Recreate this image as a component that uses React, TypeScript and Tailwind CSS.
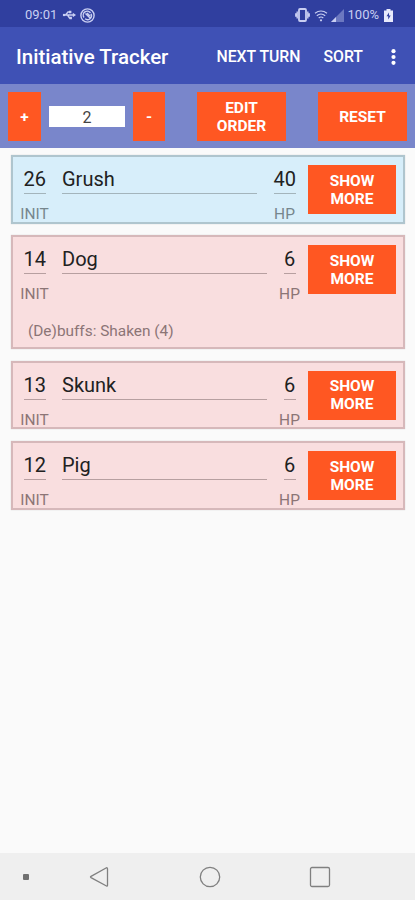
import React from 'react';
import clsx from 'clsx';

const COMBATANTS = [
  { id: 'grush', init: 26, name: 'Grush', hp: 40, active: true, debuffs: '' },
  { id: 'dog', init: 14, name: 'Dog', hp: 6, active: false, debuffs: 'Shaken (4)' },
  { id: 'skunk', init: 13, name: 'Skunk', hp: 6, active: false, debuffs: '' },
  { id: 'pig', init: 12, name: 'Pig', hp: 6, active: false, debuffs: '' }
];

type Combatant = (typeof COMBATANTS)[number];

const ActionButton = ({ className, children }: { className?: string; children: React.ReactNode }) => (
  <button
    className={clsx(
      'h-[49px] shrink-0 bg-[#ff5722] text-center text-[15.5px] leading-[18px] font-bold text-white',
      className
    )}
  >
    {children}
  </button>
);

const StatusBar = () => (
  <div className="flex h-[27px] items-center justify-between bg-[#303f9f] pt-[3px] pr-[22px] pl-[25px] text-[#c9cff2]">
    <div className="flex items-center">
      <span className="text-[13px] leading-4">09:01</span>
      {/* usb */}
      <svg width="14" height="12" viewBox="0 0 14 12" className="ml-[5px]" fill="none" stroke="currentColor" strokeWidth="1.4">
        <path d="M1 6h11M3.5 6L6 3h2M5.5 6l2 3h2" />
        <circle cx="2" cy="6" r="1.2" fill="currentColor" stroke="none" />
        <path d="M10.8 3.8L14 6l-3.200 2.200z" fill="currentColor" stroke="none" />
        <path d="M7 1.800h2.400v2.400H7zM7.500 7.800h2.400v2.400H7.500z" fill="currentColor" stroke="none" />
      </svg>
      <svg width="15" height="15" viewBox="0 0 15 15" className="ml-[4px]" fill="none" stroke="currentColor" strokeWidth="1.4">
        <circle cx="7.5" cy="7.5" r="6.6" />
        <path d="M4 9.500a4 4 0 0 1 6.500-4.700M11 5.800a4 4 0 0 1-6 5M5.500 5.500l4.500 4.500M7 5l3 3" />
      </svg>
    </div>
    <div className="flex items-center">
      {/* vibrate */}
      <svg width="15" height="14" viewBox="0 0 15 14" fill="none" stroke="currentColor" strokeWidth="1.8">
        <rect x="4" y="1" width="7" height="12" rx="1" />
        <path d="M2.200 3.500v7M12.800 3.500v7M.8 5.200v3.600M14.200 5.200v3.600" strokeWidth="1.4" />
      </svg>
      <svg width="14" height="13" viewBox="0 0 14 13" className="ml-[4px]" fill="none" stroke="currentColor" strokeWidth="1.2">
        <path d="M1 4.200q6-4.400 12 0M2.800 6.700q4.200-3.400 8.400 0M4.700 9q2.300-2 4.600 0" />
        <circle cx="7" cy="11.3" r="1.1" fill="currentColor" stroke="none" />
      </svg>
      <svg width="13" height="13" viewBox="0 0 13 13" className="ml-[3px]" fill="currentColor">
        <path d="M13 0v13H0z" opacity="0.4" />
        <path d="M5 8v5H0z" />
      </svg>
      <span className="ml-[4px] text-[13px] leading-4">100%</span>
      <svg width="9" height="13" viewBox="0 0 9 13" className="ml-[5px]">
        <path d="M2.500 0h4v1.500H9V13H0V1.500h2.500z" fill="#e8eafc" />
        <path d="M5 3.500L2.500 7.300h1.700v3.200l2.500-4H5z" fill="#303f9f" />
      </svg>
    </div>
  </div>
);

const AppBar = () => (
  <header className="flex h-[57px] items-center bg-[#3f51b5] pt-[2px] pr-[19px] pl-4 font-medium text-white">
    <h1 className="flex-1 text-[20.5px] leading-6 whitespace-nowrap">Initiative Tracker</h1>
    <button className="mr-[23px] text-[15.8px] whitespace-nowrap">NEXT TURN</button>
    <button className="mr-[28px] text-[15.8px]">SORT</button>
    <svg width="5" height="16" viewBox="0 0 5 16" fill="currentColor">
      <circle cx="2.5" cy="2.2" r="2.1" />
      <circle cx="2.5" cy="8" r="2.1" />
      <circle cx="2.5" cy="13.8" r="2.1" />
    </svg>
  </header>
);

const RoundControls = () => (
  <div className="flex h-[64px] items-center bg-[#7986cb] pt-px pr-[8px] pl-[8px]">
    <ActionButton className="w-[33px]">+</ActionButton>
    <div className="ml-2 flex h-[21px] w-[76px] items-center justify-center bg-white pt-[2px] text-[16px] text-[#444]">
      2
    </div>
    <ActionButton className="ml-2 w-[32px]">-</ActionButton>
    <ActionButton className="ml-[32px] w-[89px]">
      EDIT
      <br />
      ORDER
    </ActionButton>
    <ActionButton className="ml-auto w-[89px]">RESET</ActionButton>
  </div>
);

const CombatantCard = ({ combatant }: { combatant: Combatant }) => {
  const { init, name, hp, active, debuffs } = combatant;
  const line = active ? 'border-[#a3b4bb]' : 'border-[#b79fa0]';
  const label = active ? 'text-[#76868d]' : 'text-[#8c7576]';

  return (
    <div
      className={clsx(
        'border-2 pl-[7px] shadow-[0_0_1px_rgba(0,0,0,0.2)]',
        active ? 'border-[#afc5ce] bg-[#d7eefa]' : 'border-[#d6b8ba] bg-[#f9dedf]',
        debuffs ? 'h-[114px]' : 'h-[68.5px]'
      )}
    >
      <div className="flex h-[64px] text-[20px] leading-6 text-[#212121]">
        <div className="flex w-[29px] flex-col items-center pt-[10px]">
          <span className={clsx('h-[27px] w-[22px] shrink-0 border-b text-center', line)}>{init}</span>
          <span className={clsx('mt-[10px] text-[15.5px] leading-5', label)}>INIT</span>
        </div>
        <div className="ml-[13px] flex-1 pt-[10px]">
          <div className={clsx('h-[27px] border-b', line)}>{name}</div>
        </div>
        <div className={clsx('ml-3 flex flex-col items-center pt-[10px]', hp > 9 ? 'w-[31px]' : 'w-[21px]')}>
          <span className={clsx('h-[27px] shrink-0 border-b text-center', hp > 9 ? 'w-[22px]' : 'w-[12px]', line)}>{hp}</span>
          <span className={clsx('mt-[10px] text-[15.5px] leading-5', label)}>HP</span>
        </div>
        <ActionButton className="mt-[8px] mr-[7px] ml-[8px] w-[88px]">
          SHOW
          <br />
          MORE
        </ActionButton>
      </div>
      {debuffs && <p className={clsx('pt-[20px] pl-[8px] text-[15.4px] leading-5', label)}>(De)buffs: {debuffs}</p>}
    </div>
  );
};

const NavigationBar = () => (
  <nav className="flex h-[47px] items-center bg-[#efefef] pl-[23px] text-[#808080]">
    <span className="size-[6px] rounded-[1px] bg-[#707070]" />
    <svg width="20" height="22" viewBox="0 0 20 22" className="ml-[60px]" fill="none" stroke="currentColor" strokeWidth="1.3" strokeLinejoin="round">
      <path d="M17.500 1.700q1 0 1 1v16.600q0 1.200-1 .7L2 11.600q-1-.6 0-1.200z" />
    </svg>
    <svg width="22" height="22" viewBox="0 0 22 22" className="ml-[90px]" fill="none" stroke="currentColor" strokeWidth="1.3">
      <circle cx="11" cy="11" r="9.7" />
    </svg>
    <svg width="22" height="22" viewBox="0 0 22 22" className="ml-[88px]" fill="none" stroke="currentColor" strokeWidth="1.3">
      <rect x="1.5" y="1.5" width="19" height="19" rx="1.5" />
    </svg>
  </nav>
);

export default function App() {
  return (
    <div className="flex h-[900px] w-[415px] flex-col overflow-hidden bg-[#fafafa] font-['Roboto',sans-serif]">
      <StatusBar />
      <AppBar />
      <RoundControls />
      <main className="flex flex-1 flex-col gap-[11.7px] pt-[7px] pr-[10px] pl-[11px]">
        {COMBATANTS.map((combatant) => (
          <CombatantCard key={combatant.id} combatant={combatant} />
        ))}
      </main>
      <NavigationBar />
    </div>
  );
}
